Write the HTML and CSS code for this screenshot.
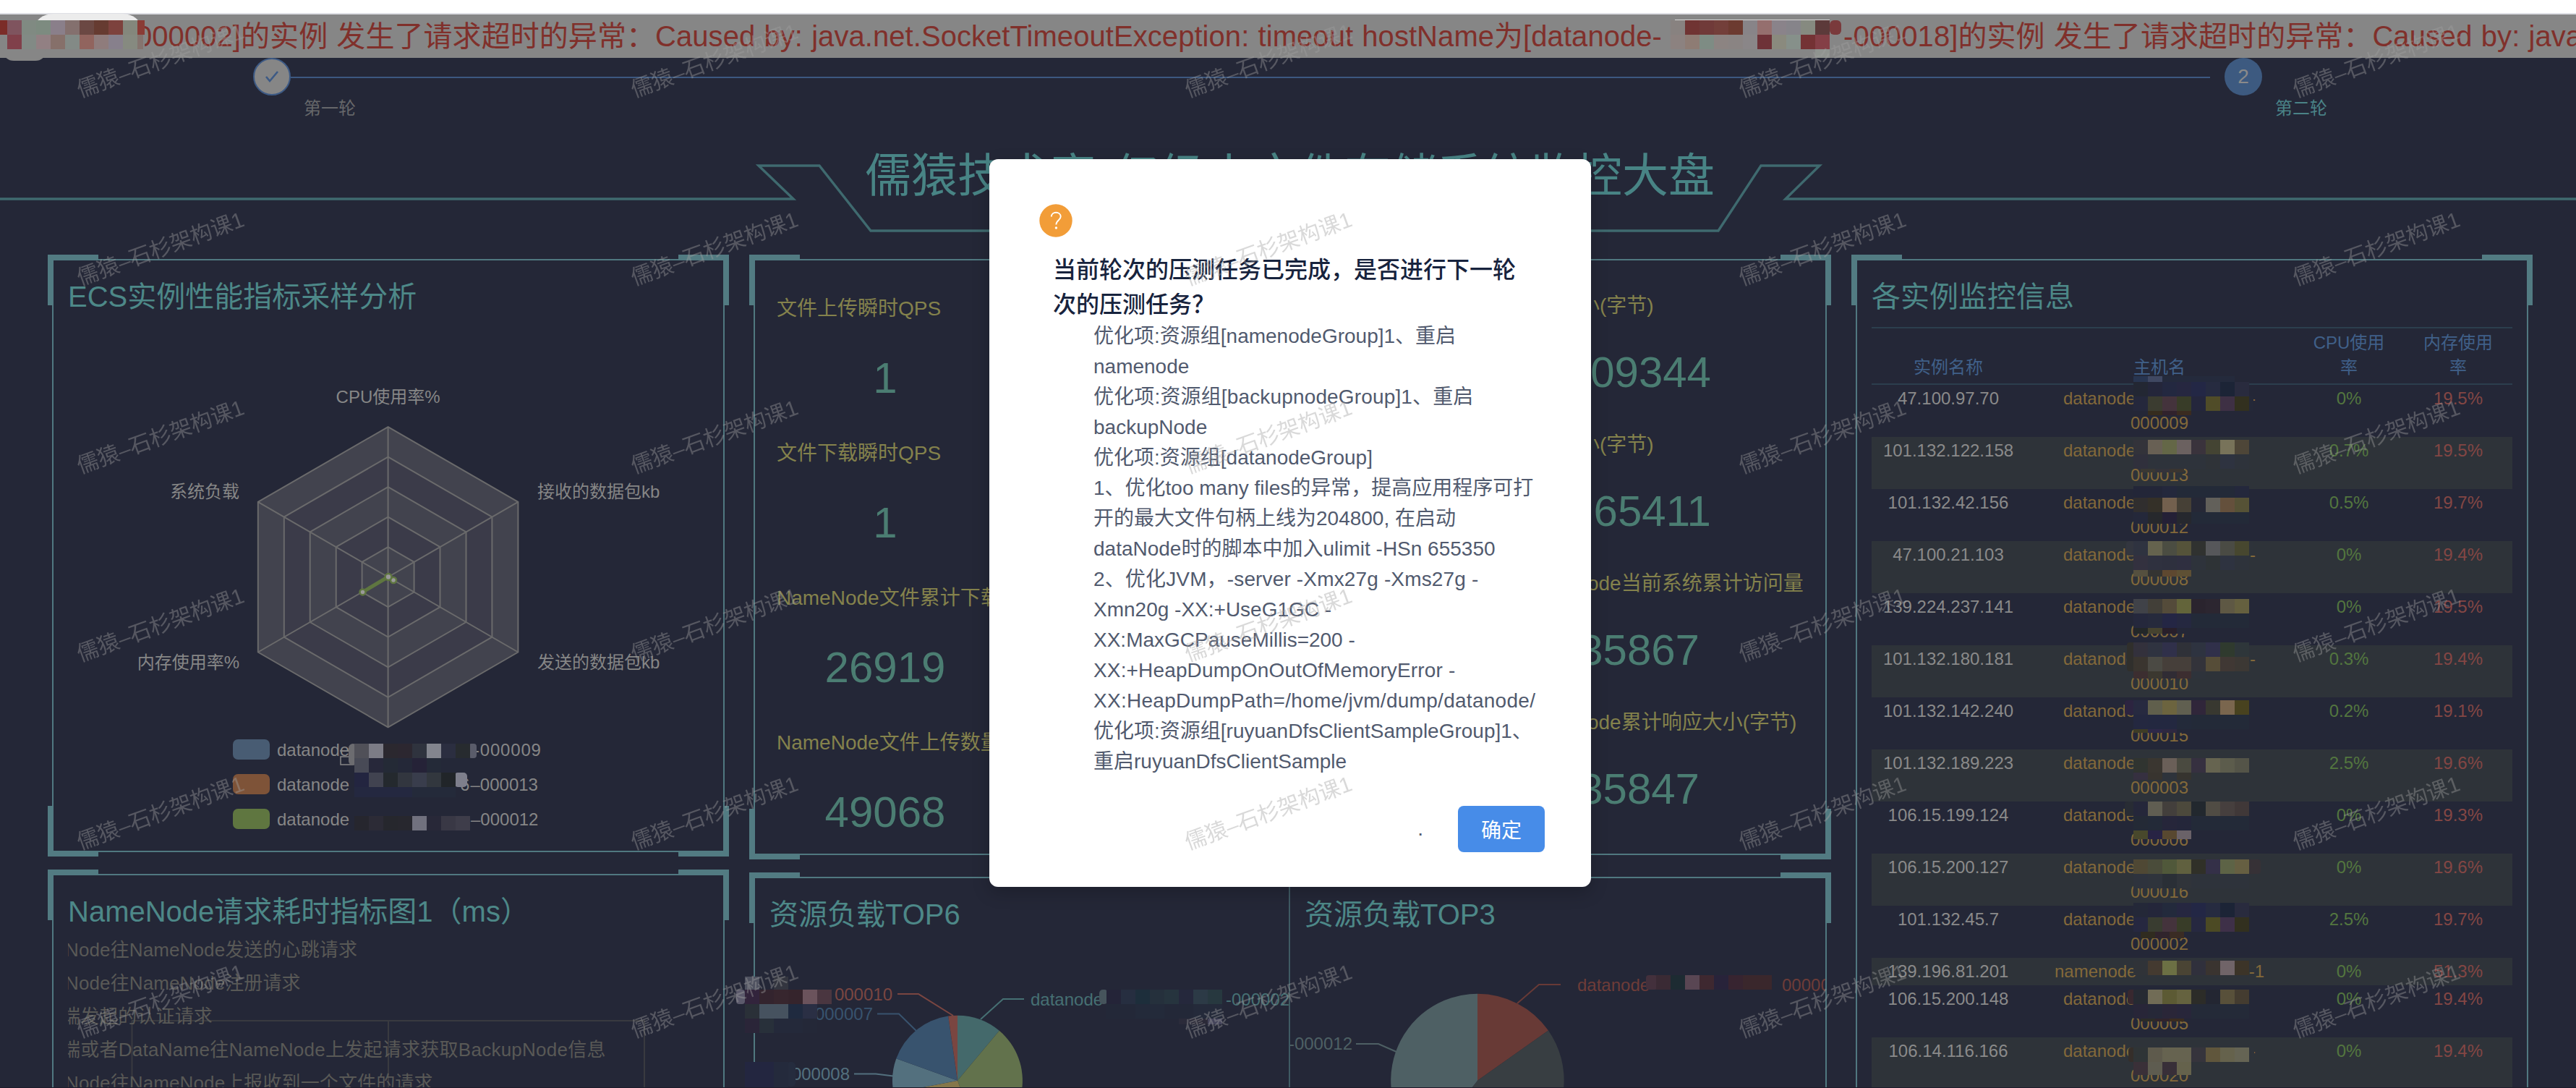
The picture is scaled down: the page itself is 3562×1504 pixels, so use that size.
FILE: index.html
```html
<!DOCTYPE html>
<html lang="zh-CN">
<head>
<meta charset="utf-8">
<title>系统监控大盘</title>
<link rel="stylesheet" href="styles.css">
</head>
<body>
<div class="page">
  <div class="browser-edge"></div>
  <div class="marquee"><span class="msg first">000002]的实例 发生了请求超时的异常：Caused by: java.net.SocketTimeoutException: timeout hostName为[datanode-</span><span class="msg">-000018]的实例 发生了请求超时的异常：Caused by: java.net.SocketTimeoutException</span></div>

  <div class="steps">
    <div class="step done">
      <div class="dot"><svg width="24" height="20" viewBox="0 0 24 20"><path d="M4 10l5 6L20 3" fill="none" stroke="#3d5a85" stroke-width="2.6"/></svg></div>
      <div class="step-name">第一轮</div>
    </div>
    <div class="step-line"></div>
    <div class="step active">
      <div class="dot">2</div>
      <div class="step-name">第二轮</div>
    </div>
  </div>

  <header class="head">
    <svg class="head-frame" width="3562" height="150" viewBox="0 190 3562 150"><path d="M0 275H1097L1049 229H1133L1204 319H2376L2435 229H2516L2469 275H3562" fill="none" stroke="#3f6a6f" stroke-width="3.4"/></svg>
    <h1>儒猿技术窝 亿级小文件存储系统监控大盘</h1>
  </header>

  <main class="board">
    <div class="col">
      <section class="panel radar-panel">
        <i class="c tl"></i><i class="c tr"></i><i class="c bl"></i><i class="c br"></i>
        <h2>ECS实例性能指标采样分析</h2>
        <svg class="chart" width="926" height="736" viewBox="74 440 926 736">
          <g stroke="#6a6a6b" stroke-width="2">
            <path fill="#42434e" d="M536.6 590.1L716.4 693.9V901.5L536.6 1005.3L356.8 901.5V693.9Z"/>
            <path fill="#3b3b49" d="M536.6 631.6L680.4 714.7V880.7L536.6 963.8L392.8 880.7V714.7Z"/>
            <path fill="#42434e" d="M536.6 673.1L644.5 735.4V860L536.6 922.3L428.7 860V735.4Z"/>
            <path fill="#3b3b49" d="M536.6 714.7L608.5 756.2V839.2L536.6 880.7L464.7 839.2V756.2Z"/>
            <path fill="#42434e" d="M536.6 756.2L572.6 776.9V818.5L536.6 839.2L500.6 818.5V776.9Z"/>
            <path fill="none" d="M536.6 590V1005M356.8 693.9L716.4 901.5M716.4 693.9L356.8 901.5"/>
          </g>
          <path d="M544 802L536.6 797.5L501.5 818.4" fill="none" stroke="#5f7640" stroke-width="5"/>
          <g fill="#9a9a9a" stroke="#5f7640" stroke-width="2.5"><circle cx="544" cy="802" r="4"/><circle cx="537" cy="797.5" r="4.4"/><circle cx="501.5" cy="818.4" r="4"/></g>
          <g class="axis">
            <text x="536.6" y="557" text-anchor="middle">CPU使用率%</text>
            <text x="743" y="688">接收的数据包kb</text>
            <text x="743" y="924">发送的数据包kb</text>
            <text x="331" y="688" text-anchor="end">系统负载</text>
            <text x="331" y="924" text-anchor="end">内存使用率%</text>
            <text x="383" y="1045">datanode</text><text class="id" x="655" y="1045">-000009</text>
            <text x="383" y="1093">datanode</text><text x="636" y="1093">6</text><text x="650.500" y="1093">–000013</text>
            <text x="383" y="1141">datanode</text><text x="651" y="1141">–000012</text>
          </g>
          <rect x="322" y="1022" width="51" height="28" rx="7" fill="#485c73"/>
          <rect x="322" y="1070" width="51" height="28" rx="7" fill="#7e5338"/>
          <rect x="322" y="1118" width="51" height="28" rx="7" fill="#5f7640"/>
          <path d="M470 1038H490M489 1046H471V1057H489" fill="none" stroke="#868686" stroke-width="1.5"/>
        </svg>
      </section>
      <section class="panel fill">
        <i class="c tl"></i><i class="c tr"></i>
        <h2>NameNode请求耗时指标图1（ms）</h2>
        <div class="line-chart">
          <svg class="grid-lines" width="926" height="224" viewBox="74 1280 926 224"><path d="M182 1411H892M182.5 1411V1504M537 1411V1504M891 1411V1504" fill="none" stroke="#393a40" stroke-width="2"/></svg>
          <ul>
            <li>Node往NameNode发送的心跳请求</li>
            <li>Node往NameNode注册请求</li>
            <li class="cut">端发起的认证请求</li>
            <li class="cut wide">端或者DataName往NameNode上发起请求获取BackupNode信息</li>
            <li>Node往NameNode上报收到一个文件的请求</li>
          </ul>
        </div>
      </section>
    </div>

    <div class="col">
      <section class="panel stats">
        <i class="c tl"></i><i class="c tr"></i><i class="c bl"></i><i class="c br"></i>
        <dl class="stat-left">
          <dt>文件上传瞬时QPS</dt><dd>1</dd>
          <dt>文件下载瞬时QPS</dt><dd>1</dd>
          <dt>NameNode文件累计下载</dt><dd>26919</dd>
          <dt>NameNode文件上传数量</dt><dd>49068</dd>
        </dl>
        <dl class="stat-right">
          <dt>上传大小(字节)</dt><dd class="long">09344</dd>
          <dt>下载大小(字节)</dt><dd class="long">65411</dd>
          <dt>NameNode当前系统累计访问量</dt><dd>35867</dd>
          <dt>NameNode累计响应大小(字节)</dt><dd>35847</dd>
        </dl>
      </section>
      <section class="panel fill pies">
        <i class="c tl"></i><i class="c tr"></i>
        <div class="pie-box">
          <h2>资源负载TOP6</h2>
          <svg class="chart" width="738" height="210" viewBox="1044 1294 738 210">
            <path fill="#44696b" d="M1324 1493.7V1403.7A90 90 0 0 1 1381.8 1424.8Z"/>
            <path fill="#62724c" d="M1324 1493.7L1381.8 1424.8A90 90 0 0 1 1356 1577.8Z"/>
            <path fill="#85774a" d="M1324 1493.7L1356 1577.8A90 90 0 0 1 1235.7 1511Z"/>
            <path fill="#53707e" d="M1324 1493.7L1235.7 1511A90 90 0 0 1 1239.3 1463.2Z"/>
            <path fill="#38536e" d="M1324 1493.7L1239.3 1463.2A90 90 0 0 1 1311.2 1404.6Z"/>
            <path fill="#7a4641" d="M1324 1493.7L1311.2 1404.6A90 90 0 0 1 1324 1403.7Z"/>
            <g fill="none" stroke-width="2">
              <path stroke="#7a4641" d="M1241 1374H1270L1318 1404"/>
              <path stroke="#38536e" d="M1213 1401.5H1243L1267 1425"/>
              <path stroke="#53707e" d="M1181 1484.5H1211L1235 1487.5"/>
              <path stroke="#467073" d="M1356 1409L1387 1381H1416"/>
            </g>
            <g class="axis">
              <text x="1234" y="1383" text-anchor="end" style="fill:#7a4641">000010</text>
              <text x="1207" y="1410" text-anchor="end" style="fill:#38536e">000007</text>
              <text x="1175" y="1493" text-anchor="end" style="fill:#53707e">000008</text>
              <text x="1425" y="1390" style="fill:#467073">datanode</text>
              <text x="1695" y="1390" style="fill:#467073">-000002</text>
            </g>
          </svg>
        </div>
        <div class="pie-box second">
          <h2>资源负载TOP3</h2>
          <svg class="chart" width="740" height="210" viewBox="1784 1294 740 210">
            <path fill="#683a36" d="M2043 1493.7V1373.7A120 120 0 0 1 2141 1424.5Z"/>
            <path fill="#383e42" d="M2043 1493.7L2141 1424.5A120 120 0 0 1 1969 1588Z"/>
            <path fill="#4e6064" d="M2043 1493.7L1969 1588A120 120 0 0 1 2043 1373.7Z"/>
            <g fill="none" stroke-width="2">
              <path stroke="#683a36" d="M2098 1387L2128 1361H2158"/>
              <path stroke="#4e6064" d="M1875 1443H1906L1931 1454"/>
            </g>
            <g class="axis">
              <text x="2181" y="1370" style="fill:#6e3c38">datanode</text>
              <text x="2464" y="1370" style="fill:#6e3c38">000001</text>
              <text x="1870" y="1451" text-anchor="end" style="fill:#4e6064">-000012</text>
            </g>
          </svg>
        </div>
      </section>
    </div>

    <div class="col">
      <section class="panel fill">
        <i class="c tl"></i><i class="c tr"></i>
        <h2>各实例监控信息</h2>
        <div class="table">
          <div class="tr th"><span>实例名称</span><span>主机名</span><span>CPU使用<br>率</span><span>内存使用<br>率</span></div>
          <div class="tr"><span>47.100.97.70</span><span><b>datanode<u>-</u></b>000009</span><span>0%</span><span>19.5%</span></div>
          <div class="tr"><span>101.132.122.158</span><span><b>datanode</b>000013</span><span>0.7%</span><span>19.5%</span></div>
          <div class="tr"><span>101.132.42.156</span><span><b>datanode</b>000012</span><span>0.5%</span><span>19.7%</span></div>
          <div class="tr"><span>47.100.21.103</span><span><b>datanode<u>-</u></b>000008</span><span>0%</span><span>19.4%</span></div>
          <div class="tr"><span>139.224.237.141</span><span><b>datanode</b>000007</span><span>0%</span><span>19.5%</span></div>
          <div class="tr"><span>101.132.180.181</span><span><b>datanode<u>-</u></b>000010</span><span>0.3%</span><span>19.4%</span></div>
          <div class="tr"><span>101.132.142.240</span><span><b>datanode</b>000015</span><span>0.2%</span><span>19.1%</span></div>
          <div class="tr"><span>101.132.189.223</span><span><b>datanode</b>000003</span><span>2.5%</span><span>19.6%</span></div>
          <div class="tr"><span>106.15.199.124</span><span><b>datanode</b>000006</span><span>0%</span><span>19.3%</span></div>
          <div class="tr"><span>106.15.200.127</span><span><b>datanode</b>000016</span><span>0%</span><span>19.6%</span></div>
          <div class="tr"><span>101.132.45.7</span><span><b>datanode</b>000002</span><span>2.5%</span><span>19.7%</span></div>
          <div class="tr"><span>139.196.81.201</span><span><b class="nn">namenode<u>-1</u></b></span><span>0%</span><span>51.3%</span></div>
          <div class="tr"><span>106.15.200.148</span><span><b>datanode</b>000005</span><span>0%</span><span>19.4%</span></div>
          <div class="tr"><span>106.14.116.166</span><span><b>datanode<u>-</u></b>000020</span><span>0%</span><span>19.4%</span></div>
        </div>
      </section>
    </div>
  </main>

  <svg id="mosaic" class="layer" width="3562" height="1504"></svg>

  <div class="modal">
    <div class="modal-icon"><svg width="46" height="46" viewBox="0 0 46 46"><circle cx="23" cy="23" r="22.7" fill="#f29d38"/><path d="M16.8 17.6C16.800 9.800 29.700 9.800 29.700 17.600C29.700 22 23.400 22.600 23.400 28.400" fill="none" stroke="#fff" stroke-width="1.900"/><circle cx="23.4" cy="33" r="1.700" fill="#fff"/></svg></div>
    <h3>当前轮次的压测任务已完成，是否进行下一轮<br>次的压测任务？</h3>
    <p>优化项:资源组[namenodeGroup]1、重启<br>namenode<br><span class="w1">优化项:资源组[backupnodeGroup]1、重启</span><br>backupNode<br>优化项:资源组[datanodeGroup]<br>1、优化too many files的异常，提高应用程序可打<br>开的最大文件句柄上线为204800, 在启动<br>dataNode时的脚本中加入ulimit -HSn 655350<br><span class="w1">2、优化JVM，-server -Xmx27g -Xms27g -</span><br>Xmn20g -XX:+UseG1GC -<br>XX:MaxGCPauseMillis=200 -<br><span class="w1">XX:+HeapDumpOnOutOfMemoryError -</span><br><span class="w2">XX:HeapDumpPath=/home/jvm/dump/datanode/</span><br>优化项:资源组[ruyuanDfsClientSampleGroup]1、<br>重启ruyuanDfsClientSample</p>
    <div class="modal-foot"><span class="cancel">.</span><button>确定</button></div>
  </div>

  <svg class="layer" width="3562" height="1504">
    <defs><pattern id="wm" width="766" height="260" patternUnits="userSpaceOnUse"><text class="wm" transform="translate(111 135) rotate(-20)">儒猿–石杉架构课1</text></pattern></defs>
    <rect width="3562" height="1504" fill="url(#wm)"/>
  </svg>
</div>
<script src="mosaic.js"></script>
</body>
</html>
```
FILE: styles.css
```css
* { box-sizing: border-box; }
body, h1, h2, h3, p, ul, dl, dd { margin: 0; padding: 0; }
body {
  background: #242737;
  font-family: "Liberation Sans", "Noto Sans CJK SC", sans-serif;
}
.page { position: relative; width: 3562px; height: 1504px; overflow: hidden; display: flex; flex-direction: column; border-bottom: 1px solid #1d1b2b; }
.browser-edge { flex: none; height: 20px; background: #fff; border-bottom: 2px solid #dedfe5; }

.marquee { flex: none; height: 60px; background: #868686; color: #80302b; font-size: 40px; line-height: 60px; letter-spacing: 0.06px; word-spacing: 1px; white-space: nowrap; overflow: hidden; display: flex; }
.msg.first { margin-left: 188px; width: 2361px; flex: none; }

.steps { flex: none; height: 110px; padding-left: 350px; display: flex; align-items: flex-start; }
.step { width: 52px; }
.dot { width: 52px; height: 52px; border-radius: 50%; display: flex; align-items: center; justify-content: center; font-size: 28px; }
.done .dot { background: #868686; border: 2px solid #3d5a85; }
.active .dot { background: #3d5a80; color: #8a8a8a; }
.step-line { width: 2654px; height: 2px; margin: 26px 20px 0 0; background: #3c5880; }
.step-name { margin: 1px 0 0 70px; font-size: 24px; line-height: 34px; white-space: nowrap; color: #66676a; }
.active .step-name { color: #4a8387; }

.head { flex: none; height: 168px; display: grid; justify-items: center; }
.head > * { grid-area: 1 / 1; }
.head h1 { font-size: 64px; font-weight: 400; line-height: 100px; color: #488485; white-space: nowrap; margin-top: 3px; padding-left: 5px; word-spacing: 5px; }

.board { flex: 1; min-height: 0; display: grid; grid-template-columns: 930px 1484px 930px; gap: 40px; padding-left: 72px; }
.col { display: flex; flex-direction: column; gap: 30px; min-height: 0; min-width: 0; }
.panel { position: relative; flex: none; border: 2px solid #507880; border-radius: 0; }
.radar-panel { height: 820px; }
.stats { height: 824px; display: flex; }
.panel.fill { flex: 1; border-bottom: 0; min-height: 0; }
.c { position: absolute; width: 70px; height: 70px; border: 0 solid #527b82; }
.c.tl { left: -8px; top: -8px; border-width: 8px 0 0 8px; }
.c.tr { right: -8px; top: -8px; border-width: 8px 8px 0 0; }
.c.bl { left: -8px; bottom: -8px; border-width: 0 0 8px 8px; }
.c.br { right: -8px; bottom: -8px; border-width: 0 8px 8px 0; }
.panel h2 { font-size: 40px; font-weight: 400; line-height: 60px; padding: 20px 0 0 20px; height: 80px; color: #4d8888; white-space: nowrap; }
.chart { display: block; }
.axis text { font-size: 24px; fill: #868686; }
.axis .id { letter-spacing: 0.8px; }

.line-chart { display: grid; margin-top: -10px; }
.line-chart > * { grid-area: 1 / 1; }
.line-chart ul { list-style: none; margin-left: 20px; padding-top: 10px; overflow: hidden; height: 224px; }
.line-chart li { font-size: 26px; line-height: 46px; letter-spacing: 0.12px; color: #595956; margin-left: -4px; white-space: nowrap; }
.line-chart li.cut { margin-left: -9px; }
.line-chart li.wide { letter-spacing: 0.26px; }

.stat-left { width: 1056px; padding: 47px 0 0 30px; }
.stat-right { padding-top: 43px; }
dt { font-size: 28px; line-height: 40px; height: 40px; color: #84824c; white-space: nowrap; }
dd { font-size: 60px; color: #4b7d72; }
.stat-left dd { width: 300px; line-height: 152px; height: 160px; text-align: center; }
.stat-right dd { width: 250px; line-height: 143px; height: 152px; text-align: right; }
.stat-right dd.long { width: 266px; }

.pies { display: flex; }
.pie-box { width: 740px; border-right: 2px solid #3f5a63; }
.pie-box.second { border: 0; }

.table { width: 886px; margin: 12px 0 0 20px; }
.table .tr { display: grid; grid-template-columns: 212px 372px 152px 150px; font-size: 24px; line-height: 34px; padding: 2px 0; text-align: center; }
.table .tr:nth-child(odd) { background: #2e3339; }
.table .tr.th { height: 80px; padding: 3px 0 5px; align-items: end; background: none; border-top: 2px solid #2c3e4d; border-bottom: 2px solid #2c3e4d; }
.tr span:nth-child(1) { color: #8a8a8a; }
.tr span:nth-child(2) { color: #83693a; }
.tr span:nth-child(3) { color: #53763f; }
.tr span:nth-child(4) { color: #834644; }
.tr.th span:nth-child(n) { color: #406089; }
.tr b { display: flex; justify-content: space-between; width: 266px; margin: 0 auto; font-weight: 400; }
.tr b.nn { width: 290px; }
.tr u { text-decoration: none; }

.layer { position: absolute; left: 0; top: 0; pointer-events: none; }
.wm { font-size: 30px; fill: #a0a0a0; fill-opacity: 0.4; }

.modal { position: absolute; left: 1368px; top: 220px; width: 832px; height: 1006px; background: #fff; border-radius: 12px; box-shadow: 0 8px 24px rgba(0, 0, 0, 0.2); padding: 62px 64px 48px 69px; display: flex; flex-direction: column; }
.modal-icon { height: 46px; }
.modal h3 { margin: 21px 0 0 19px; font-size: 32px; line-height: 48px; font-weight: 500; color: #17233d; white-space: nowrap; }
.modal p { margin: -1px 0 0 75px; font-size: 28px; line-height: 42px; color: #515a6e; white-space: nowrap; }
.w1 { letter-spacing: 0.15px; }
.w2 { letter-spacing: 0.28px; }
.modal-foot { margin-top: auto; display: flex; justify-content: flex-end; align-items: center; gap: 48px; font-size: 28px; color: #515a6e; }
.modal-foot button { width: 120px; height: 64px; border: 0; border-radius: 8px; background: #478ce8; color: #fff; font: inherit; }
```
FILE: mosaic.js
```js
// Redaction blocks: [x, y, cell height, "cell colours from left to right"], 20px wide cells, "." leaves a gap.
var T = 2950;
var rows = [
  [-10, 28, 20, "7b2c28 7f545e 808a82 7d8b80 8a7f8a 84706e 6b4843 663b31 7d423d 84877c"],
  [-10, 48, 20, "858585 80404a 828a85 928083 86706a 838a86 91645e 8f7c7c 87808c 868a80"],
  [2310, 28, 20, "888280 703433 703a39 733f3a 6c3a30 888488 956f6e 8a838a 86848a 868a80 5c3a3a"],
  [2310, 48, 20, "8c8280 8e7c74 7e8c84 8c8482 8a8483 8a8688 6e3238 8a8a7e 86908a 743234 843f46"],
  [2510, 68, 12, "909490"],
  [490, 1028, 20, "505058 7c7c86 2b282f 2c2730 2f333e 83858e 2b2e40 272b2f"],
  [490, 1048, 20, "484a56 27283a 242a36 242838 252237 242a38 242838 242838"],
  [490, 1068, 20, "232540 414350 24292e 32363f 393d4c 32373e 212529"],
  [490, 1088, 14, "242840 242840 242840 242840 242a3a 242a3a 242a3a"],
  [490, 1128, 20, "26262e 2c2b36 26272d 27272e 71717e 282838 393845 3e3d4a"],
  [1030, 1350, 18, "4f5260 . 33353f"],
  [1030, 1368, 20, "32243c 33242e 37262e 35242c 6b535c 4a3640"],
  [1030, 1388, 20, "2a3038 46525f 46525f 1f2a3f 2a2f44"],
  [1030, 1408, 20, "2a2538 28303a 24293a 24293a 242838"],
  [1030, 1468, 36, "232640 232640 242a3c"],
  [1530, 1368, 20, "242438 262e40 1d2e3b 25303c 26343e 25283c 2c3a46 27383f"],
  [1530, 1388, 20, "232838 232838 232a3a 232a3a 232838 232838 242a3a 242a3a"],
  [1630, 1408, 8, "2b2b3a 2b2a38 44445a"],
  [2290, 1348, 20, "3a2a34 1d2b32 594653 3e2830 28233a 372430 3a272c 3a272c"],
  [T, 520, 8, "283550 404862 242a3c 242a3c 242a3c 242a3c 242a3c"],
  [T, 528, 20, "232733 24263a 232840 262740 232745 262b40 1c2436 292b3e"],
  [T, 548, 20, "25283c 3b3c30 44333c 383c28 24263c 504c28 3e3044 32301f"],
  [T, 568, 6, ". 352c1e 30222c 3a2b20"],
  [T, 608, 20, "33333a 686054 646747 6b6160 3a333c 444433 78735a 4e4638"],
  [T, 628, 20, "30303c 2e333b 2e333b 2e333b 2e333b 2f3338 2e3340 2e333b"],
  [T + 10, 648, 5, "3a3833 34333a 3a3530"],
  [T, 672, 16, "232638 232638 24283c 232a38 232a38 232a38 232a38 24283c"],
  [T, 688, 20, "302e2e 343028 73604e 464036 262836 62605a 64503c 565236"],
  [T, 708, 16, "24283a 26282c 242036 26282e 232a38 232a38 232a38 232a38"],
  [T, 748, 20, "2f3340 65634e 4b4d42 55533a 303230 56575a 4a4b44 47472f"],
  [T, 768, 20, "33313f 2f313f 2e303e 2f2f40 2e333b 2e3336 2e3340 2e333b"],
  [T, 788, 9, "55503f 343432 5e4830 5e5034"],
  [T, 828, 20, "404248 423f38 544b3a 63643a 2a242e 2c2630 5e5844 65603f"],
  [T, 848, 20, "25283c 262a3c 242644 252840 232a38 232a38 232a38 232a38"],
  [T, 868, 8, "232728 46432f 281f2a 242737"],
  [T, 888, 20, "33313c 2f3340 30304a 2f3138 2e3340 30304a 2f3a2e 2e363a"],
  [T, 908, 20, "3a352f 4b4a44 463f3a 463f3a 33333a 564d38 403834 3c3834"],
  [T, 928, 10, "3c2e30 3b3830 302c34 3c2e30 2e333b"],
  [T, 968, 20, "272a40 605f4c 6c643f 605f50 30263a 383830 7a664e 48421f"],
  [T, 988, 20, "242840 232840 232840 232a3a 232a38 232a38 232a38 232a38"],
  [T, 1008, 5, "3e3c26 2e2848 2e2840 242737"],
  [T, 1048, 20, "303430 3a3630 6a5f58 4a4a40 363040 666450 5c5c4c 545448"],
  [T, 1068, 10, "363040 38342f 2e333b 36342f"],
  [T, 1108, 20, "25273a 605e52 433f3c 4c493c 22282e 504c44 463f3e 403838"],
  [T, 1128, 20, "242a36 232a38 26263a 24263a 232a38 232a38 232a38 232a38"],
  [T, 1148, 12, "48482c 282344 584830 6a6268"],
  [T, 1188, 20, "4f4834 4a4c3a 50583a 60603f 303028 343048 5d6346 665f42"],
  [T, 1208, 20, "2e333d 2f343c 2a2f36 30343a 2e333b 2e333b 2e333b 2e333b"],
  [T, 1248, 20, "242838 24263a 232a3c 262740 232745 262b40 1c2436 292b3e"],
  [T, 1268, 20, "262840 393c30 44333c 383c28 262840 4c4a24 3e3048 32301f"],
  [T + 10, 1288, 9, "302c20 30242c 3a2c24"],
  [T, 1328, 20, "303338 443a30 6c7044 4a4434 30303c 3a3430 706468 3c3428"],
  [T, 1368, 20, "262a32 716c56 5c5a34 65623f 2c2c28 232632 58503a 443c30"],
  [T, 1388, 20, "282638 262838 2a2638 28263a 242a38 242a38 242a38 242a38"],
  [T + 10, 1408, 4, "2c2c28 30242c 3a2c20"],
  [T, 1448, 20, "2f3436 5e5a4c 666350 666350 36343c 60563c 65624c 656454"],
  [T, 1468, 18, "3a3038 5e5c50 382f38 65624c"]
];
var svg = document.getElementById("mosaic");
function block(x, y, w, h, fill, rx) {
  var r = document.createElementNS("http://www.w3.org/2000/svg", "rect");
  var a = { x: x, y: y, width: w, height: h, fill: fill, rx: rx || 0 };
  for (var k in a) r.setAttribute(k, a[k]);
  svg.appendChild(r);
}
block(48, 19, 147, 40, "#ececec", 26);
block(48, 28, 152, 40, "#868686", 0);
block(5, 60, 58, 24, "#868686", 14);
block(2316, 27, 214, 1, "#d8d8d8", 0);
block(190, 28, 10, 20, "#8a3c36", 0);
block(190, 48, 8, 20, "#85746f", 0);
block(2530, 28, 16, 20, "#7a3a3c", 6);
block(482, 1028, 12, 30, "#6c6c70", 6);
block(648, 1028, 11, 20, "#5a5c6a", 4);
block(628, 1068, 18, 20, "#7e7f8c", 5);
block(1018, 1368, 12, 20, "#5c5a6c", 4);
block(1088, 1468, 12, 34, "#252c3e", 5);
block(1520, 1368, 12, 20, "#46545c", 5);
block(2276, 1348, 16, 20, "#43303c", 4);
// Rounded brush ends that reach over the host names and trailing dashes.
block(2938, 968, 14, 20, "#2c2440", 4);
block(2940, 748, 12, 20, "#33363f", 4);
block(2941, 888, 12, 40, "#302f2c", 4);
block(2938, 1108, 14, 20, "#282c34", 4);
block(2942, 1368, 12, 20, "#38282f", 4);
block(2943, 1448, 12, 20, "#352e2a", 4);
block(3108, 548, 8, 20, "#242838", 0);
block(3108, 748, 8, 20, "#2e333a", 0);
block(3108, 1188, 18, 20, "#363136", 4);
block(3108, 1448, 9, 20, "#2e333a", 0);
rows.forEach(function (r) {
  r[3].split(" ").forEach(function (c, i) {
    if (c !== ".") block(r[0] + i * 20, r[1], 20, r[2], "#" + c);
  });
});
```
